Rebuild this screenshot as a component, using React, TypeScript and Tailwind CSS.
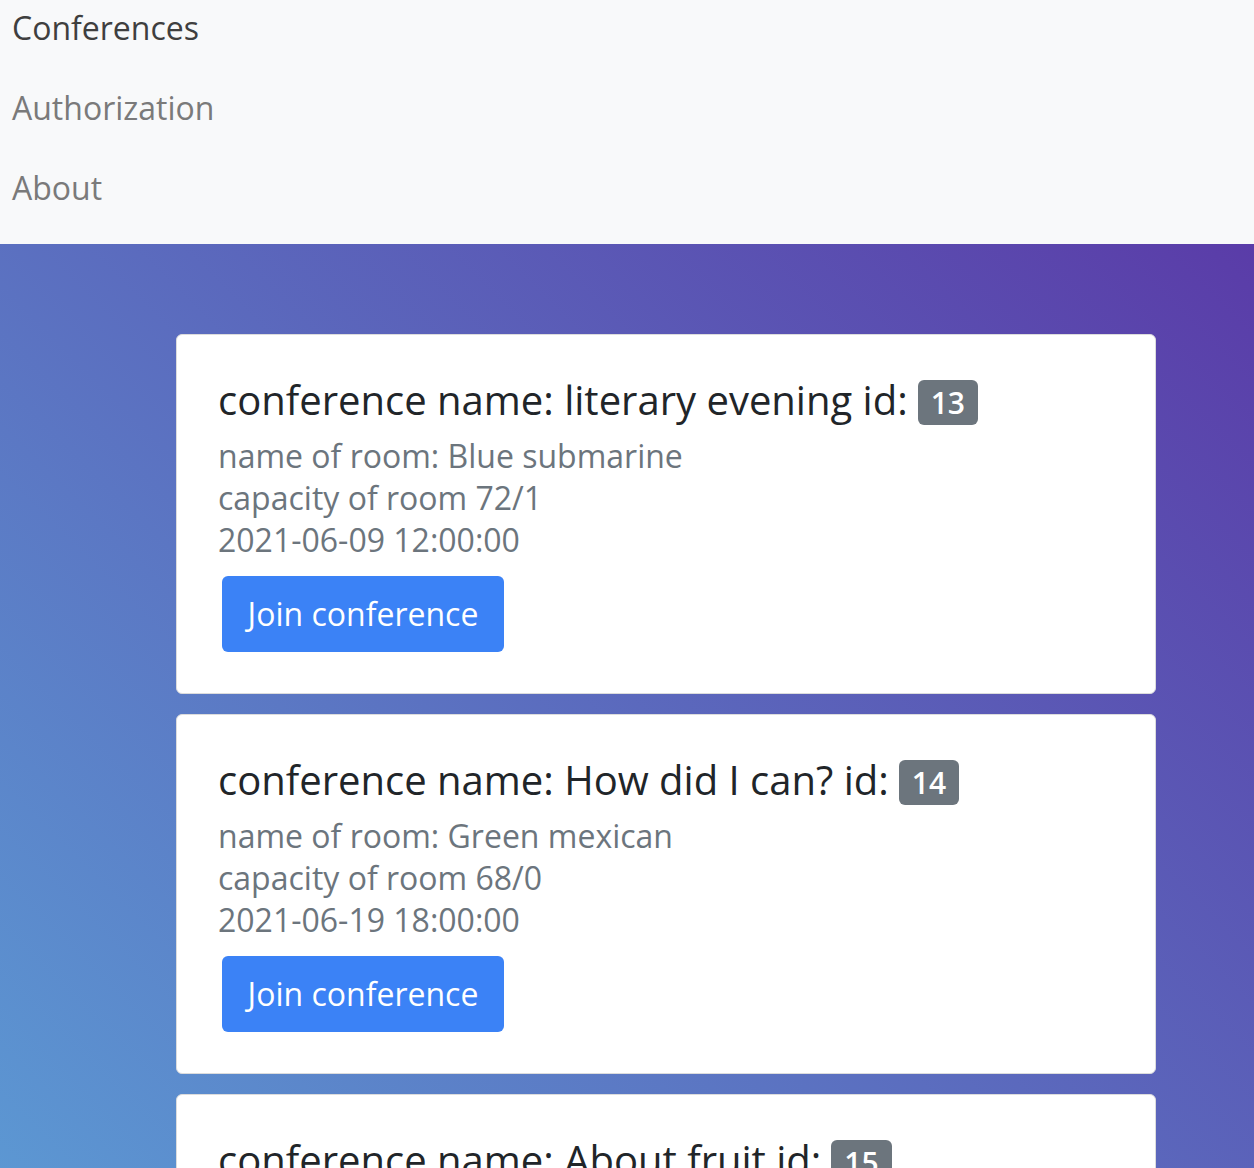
import React from "react";

const confs = [
  { name: "literary evening", id: 13, room: "Blue submarine", cap: "72/1", date: "2021-06-09 12:00:00" },
  { name: "How did I can?", id: 14, room: "Green mexican", cap: "68/0", date: "2021-06-19 18:00:00" },
  { name: "About fruit", id: 15, room: "Red tomato", cap: "50/0", date: "2021-06-29 18:00:00" },
];

export default function App() {
  return (
    <div className="h-[1168px] overflow-hidden font-['Open_Sans',sans-serif]">
      <nav className="bg-[#f8f9fa] h-[244px] flex flex-col gap-[32px] pt-[4px] pl-[12px]">
        <a className="text-[32px] leading-[48px] text-[#3f3f3f]">Conferences</a>
        <a className="text-[32px] leading-[48px] text-[#7a7a7a]">Authorization</a>
        <a className="text-[32px] leading-[48px] text-[#7a7a7a]">About</a>
      </nav>
      <main className="min-h-[924px] bg-[linear-gradient(45deg,#5ca3d8,#5a3ca8)] pt-[90px]">
        <div className="ml-[176px] w-[980px] flex flex-col gap-[20px]">
          {confs.map((c) => (
            <div key={c.id} className="bg-white border border-[#dcdcdc] rounded-[6px] pt-[41px] pb-[41px] px-[41px]">
              <h5 className="h-[48px] text-[40px] leading-[48px] text-[#212529] flex items-center">
                <span>conference name: {c.name} id:</span>
                <span className="ml-[10px] translate-y-[2px] bg-[#6c757d] text-white rounded-[6px] text-[30px] leading-[45px] px-[13px] font-semibold">{c.id}</span>
              </h5>
              <div className="mt-[11px] text-[32px] leading-[42px] text-[#6c757d]">
                <p>name of room: {c.room}</p>
                <p>capacity of room {c.cap}</p>
                <p>{c.date}</p>
              </div>
              <button className="mt-[15px] ml-[4px] h-[76px] w-[282px] bg-[#3b82f6] text-white rounded-[6px] text-[32px]">
                Join conference
              </button>
            </div>
          ))}
        </div>
      </main>
    </div>
  );
}
